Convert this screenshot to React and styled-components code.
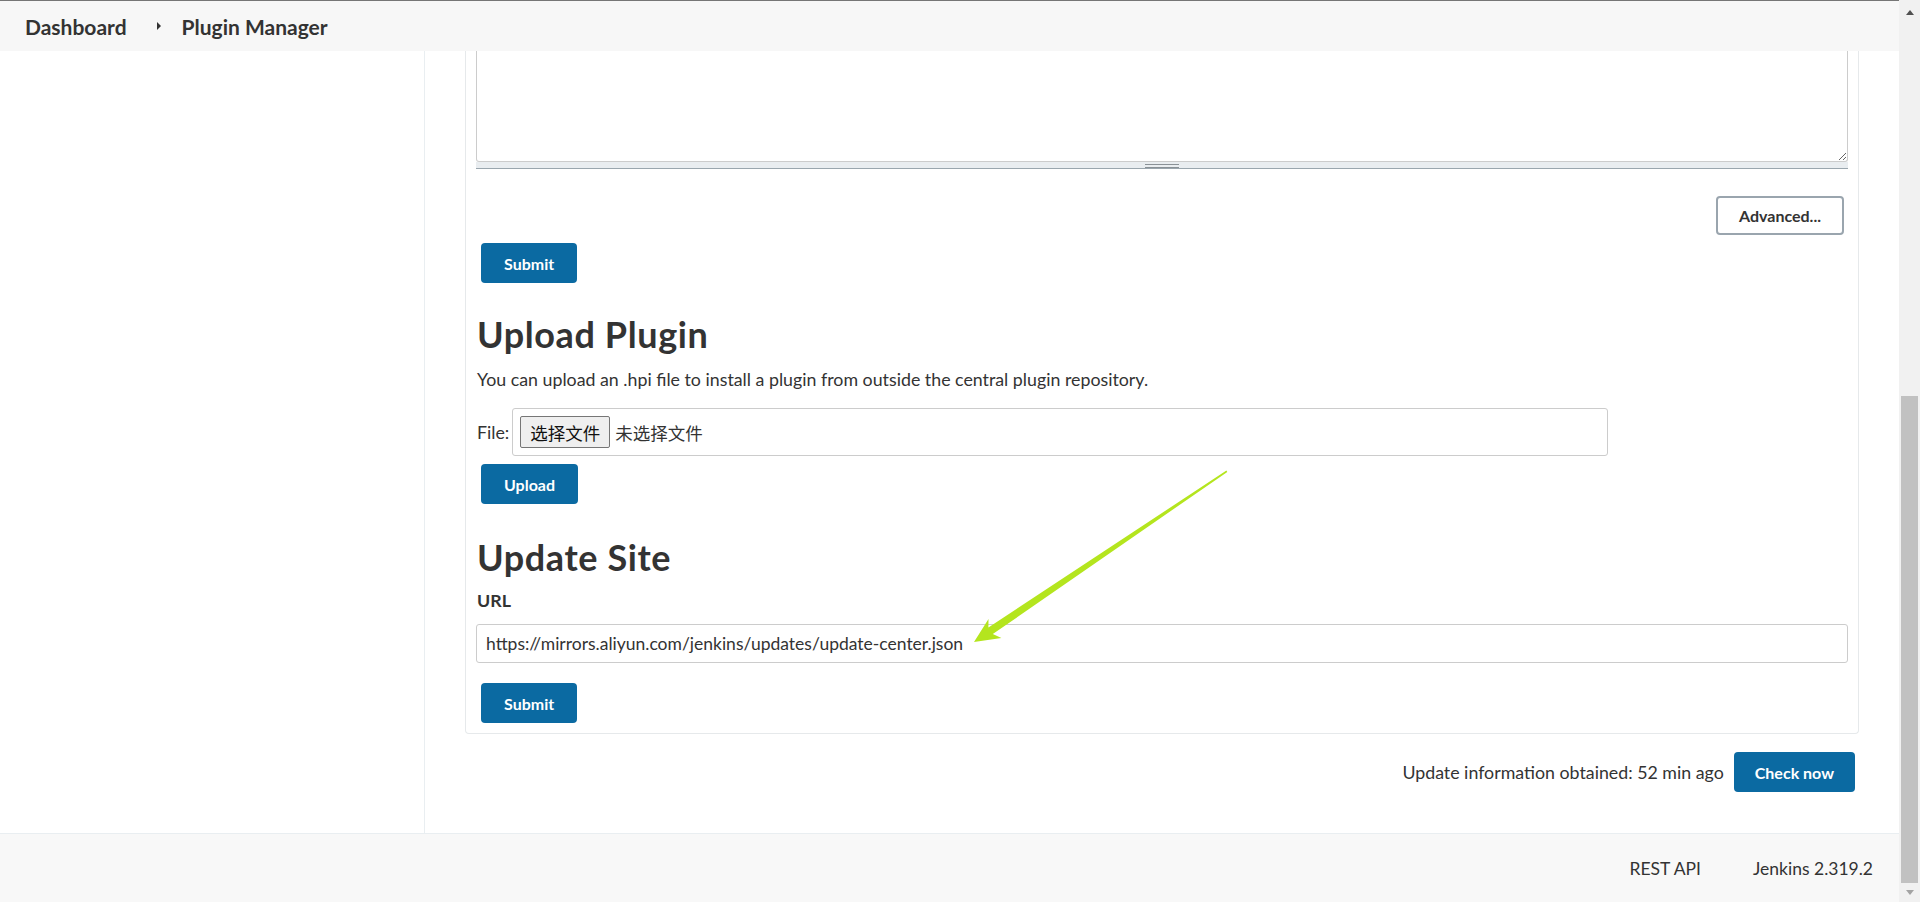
import React from 'react';
import styled, { createGlobalStyle } from 'styled-components';

const font = `Lato, "Noto Sans CJK SC", sans-serif`;
const cjk = `"Noto Sans CJK SC", sans-serif`;

const GlobalStyle = createGlobalStyle`
  html, body {
    margin: 0;
    padding: 0;
    overflow: hidden;
  }
  body {
    font-family: ${font};
    font-size: 17.8px;
    color: #333;
    background: #fff;
  }
  *, *::before, *::after {
    box-sizing: border-box;
  }
`;

const Window = styled.div`
  position: relative;
  display: flex;
  width: 1920px;
  height: 902px;
`;

const Page = styled.div`
  flex: 1;
  min-width: 0;
  display: flex;
  flex-direction: column;
`;

const Header = styled.header`
  flex: none;
  height: 51px;
  display: flex;
  align-items: center;
  padding-left: 25px;
  background: #f7f7f7;
  border-top: 1px solid #767676;
`;

const Crumb = styled.a`
  font-size: 21px;
  font-weight: 700;
  color: #333;
  text-decoration: none;
`;

const CrumbSep = styled.span`
  width: 0;
  height: 0;
  margin: 0 21px 0 30px;
  border-left: 4px solid #333;
  border-top: 4px solid transparent;
  border-bottom: 4px solid transparent;
`;

const Body = styled.div`
  flex: 1;
  min-height: 0;
  display: flex;
`;

const Sidebar = styled.aside`
  flex: none;
  width: 425px;
  border-right: 1px solid #e9eef1;
`;

const Main = styled.main`
  flex: 1;
  min-width: 0;
  padding: 0 40px;
  overflow: hidden;
`;

const Card = styled.section`
  display: flex;
  flex-direction: column;
  align-items: flex-start;
  padding: 0 10px 10px;
  border: 1px solid #e6e9eb;
  border-top: none;
  border-radius: 0 0 4px 4px;
`;

const EditorBox = styled.div`
  align-self: stretch;
  display: flex;
  flex-direction: column;
`;

const Textarea = styled.textarea`
  display: block;
  width: 100%;
  height: 111px;
  border: 1px solid #ccc;
  border-top: none;
  border-radius: 0 0 3px 3px;
  resize: vertical;
  outline: none;
  font-family: ${font};
`;

const Grip = styled.div`
  height: 7px;
  display: flex;
  justify-content: center;
  padding-top: 2px;
  background: #e9edf0;
  border-bottom: 1px solid #9aa6ae;

  &::before {
    content: '';
    width: 34px;
    height: 4px;
    border-top: 1px solid #8a9196;
    border-bottom: 1px solid #8a9196;
  }
`;

const EndRow = styled.div`
  align-self: stretch;
  display: flex;
  justify-content: flex-end;
  align-items: center;
  gap: 10px;
  padding-right: 4px;
  margin-top: ${p => p.$gap}px;
`;

const SecondaryButton = styled.button`
  height: 39px;
  padding: 0 21px;
  background: #fff;
  border: 2px solid #9aa5ae;
  border-radius: 4px;
  font: 700 16px ${font};
  color: #333;
`;

const PrimaryButton = styled.button`
  flex: none;
  height: 40px;
  padding: 0 ${p => p.$pad || 23}px;
  margin-top: ${p => p.$gap || 0}px;
  margin-left: ${p => (p.$indent ? 5 : 0)}px;
  background: #0b6aa2;
  border: none;
  border-radius: 4px;
  font: 700 16px ${font};
  color: #fff;
`;

const Heading = styled.h2`
  margin: ${p => p.$gap}px 0 0 1px;
  font-size: 36px;
  line-height: 42px;
  letter-spacing: 0.6px;
  font-weight: 700;
  color: #333;
`;

const Text = styled.p`
  margin: ${p => p.$gap || 0}px 0 0 1px;
  line-height: 24px;
  font-weight: ${p => (p.$bold ? 700 : 400)};
`;

const FileRow = styled.div`
  display: flex;
  align-items: center;
  gap: 3px;
  margin: 17px 0 0 1px;
`;

const FileBox = styled.div`
  width: 1096px;
  height: 48px;
  display: flex;
  align-items: center;
  gap: 5px;
  padding-left: 7px;
  border: 1px solid #ccc;
  border-radius: 3px;
  font-family: ${cjk};
`;

const ChooseButton = styled.span`
  height: 32px;
  padding: 0 9px;
  display: flex;
  align-items: center;
  background: #efefef;
  border: 1px solid #767676;
  border-radius: 2px;
  font-size: 17.5px;
  color: #111;
`;

const FileName = styled.span`
  font-size: 17.5px;
  color: #333;
`;

const UrlInput = styled.input`
  align-self: stretch;
  height: 39px;
  margin-top: 12px;
  padding: 0 9px;
  border: 1px solid #ccc;
  border-radius: 3px;
  font: 400 17.5px ${font};
  color: #333;
  outline: none;
`;

const Footer = styled.footer`
  flex: none;
  height: 69px;
  display: flex;
  justify-content: flex-end;
  align-items: center;
  gap: 52px;
  padding-right: 26px;
  background: #f8f8f8;
  border-top: 1px solid #e9eef1;
  font-size: 17.5px;
`;

const FooterLink = styled.a`
  color: #333;
  text-decoration: none;
`;

const Scrollbar = styled.div`
  flex: none;
  width: 21px;
  display: flex;
  flex-direction: column;
  align-items: center;
  background: #f1f1f1;
`;

const ScrollArrow = styled.div`
  flex: none;
  height: ${p => p.$h}px;
  display: flex;
  align-items: center;
  justify-content: center;

  &::before {
    content: '';
    border-left: 4.5px solid transparent;
    border-right: 4.5px solid transparent;
    ${p => (p.$up ? 'border-bottom' : 'border-top')}: 5px solid ${p => p.$color};
  }
`;

const ScrollTrack = styled.div`
  flex: 1;
  display: flex;
  flex-direction: column;
  justify-content: flex-end;
`;

const ScrollThumb = styled.div`
  width: 17px;
  height: 487px;
  background: #c1c1c1;
`;

const Annotation = styled.svg`
  position: absolute;
  left: 0;
  top: 0;
  pointer-events: none;
`;

export default function App() {
  return (
    <>
      <GlobalStyle />
      <Window>
        <Page>
          <Header>
            <Crumb href="#">Dashboard</Crumb>
            <CrumbSep />
            <Crumb href="#">Plugin Manager</Crumb>
          </Header>
          <Body>
            <Sidebar />
            <Main>
              <Card>
                <EditorBox>
                  <Textarea />
                  <Grip />
                </EditorBox>
                <EndRow $gap={27}>
                  <SecondaryButton>Advanced...</SecondaryButton>
                </EndRow>
                <PrimaryButton $gap={8} $indent>Submit</PrimaryButton>

                <Heading $gap={30}>Upload Plugin</Heading>
                <Text $gap={12}>
                  You can upload an .hpi file to install a plugin from outside the central plugin repository.
                </Text>
                <FileRow>
                  <span>File:</span>
                  <FileBox>
                    <ChooseButton>选择文件</ChooseButton>
                    <FileName>未选择文件</FileName>
                  </FileBox>
                </FileRow>
                <PrimaryButton $gap={8} $indent>Upload</PrimaryButton>

                <Heading $gap={32}>Update Site</Heading>
                <Text $gap={10} $bold>URL</Text>
                <UrlInput
                  readOnly
                  value="https://mirrors.aliyun.com/jenkins/updates/update-center.json"
                />
                <PrimaryButton $gap={20} $indent>Submit</PrimaryButton>
              </Card>
              <EndRow $gap={18}>
                <span>Update information obtained: 52 min ago</span>
                <PrimaryButton $pad={21}>Check now</PrimaryButton>
              </EndRow>
            </Main>
          </Body>
          <Footer>
            <FooterLink href="#">REST API</FooterLink>
            <FooterLink href="#">Jenkins 2.319.2</FooterLink>
          </Footer>
        </Page>
        <Scrollbar>
          <ScrollArrow $h={25} $up $color="#505050" />
          <ScrollTrack>
            <ScrollThumb />
          </ScrollTrack>
          <ScrollArrow $h={19} $color="#a3a3a3" />
        </Scrollbar>
        <Annotation width="1920" height="902" viewBox="0 0 1920 902">
          <polygon
            points="974,642 988.5,618.9 988.4,627.5 1226.4,470.5 1227.3,471.9 992.8,634.1 1001.4,637.9"
            fill="#b4e51e"
          />
        </Annotation>
      </Window>
    </>
  );
}
